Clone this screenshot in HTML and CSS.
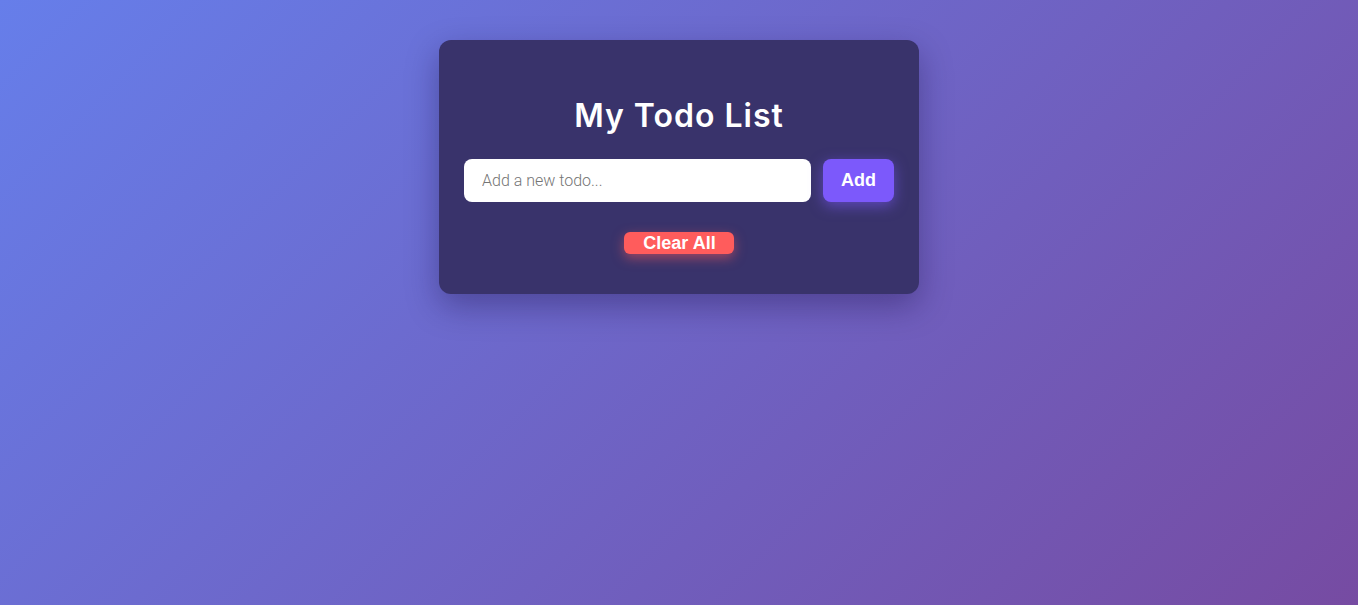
FILE: index.html
```html
<!DOCTYPE html>
<html lang="en">
<head>
<meta charset="utf-8">
<title>My Todo List</title>
<link rel="stylesheet" href="styles.css">
</head>
<body>
  <main class="card">
    <h1 class="title">My Todo List</h1>
    <form class="add-row" onsubmit="return false">
      <input class="todo-input" type="text" placeholder="Add a new todo...">
      <button class="add-btn" type="submit">Add</button>
    </form>
    <ul class="todo-list"></ul>
    <div class="actions">
      <button class="clear-btn" type="button">Clear All</button>
    </div>
  </main>
</body>
</html>
```
FILE: styles.css
```css
* { box-sizing: border-box; }

html, body {
  margin: 0;
  padding: 0;
}

body {
  min-height: 100vh;
  background: linear-gradient(135deg, #667eea 0%, #764ba2 100%);
  font-family: "Liberation Sans", Arial, sans-serif;
  display: flex;
  flex-direction: column;
  align-items: center;
  padding-top: 40px;
}

.card {
  width: 480px;
  background: #39336b;
  border-radius: 12px;
  padding: 52px 25px 40px;
  box-shadow: 0 12px 32px rgba(20, 10, 60, 0.35);
}

.title {
  margin: 0 0 19px;
  font-family: "Inter", "Noto Sans", sans-serif;
  font-weight: 600;
  font-size: 32px;
  line-height: 48px;
  letter-spacing: 1px;
  text-align: center;
  color: #ffffff;
}

.add-row {
  display: flex;
  gap: 12px;
  margin: 0;
}

.todo-input {
  flex: 1;
  height: 43px;
  border: none;
  border-radius: 8px;
  padding: 0 18px;
  font-family: "Roboto", "Liberation Sans", sans-serif;
  font-weight: 300;
  font-size: 16px;
  color: #333;
  background: #ffffff;
  outline: none;
}

.todo-input::placeholder {
  color: #757575;
}

.add-btn {
  width: 71px;
  height: 43px;
  border: none;
  border-radius: 8px;
  background: #7c59fb;
  color: #ffffff;
  font-family: "Liberation Sans", Arial, sans-serif;
  font-weight: 700;
  font-size: 18px;
  box-shadow: 0 4px 14px rgba(124, 89, 251, 0.55);
  cursor: pointer;
}

.todo-list {
  list-style: none;
  margin: 0;
  padding: 0;
}

.actions {
  display: flex;
  justify-content: center;
  margin-top: 30px;
}

.clear-btn {
  height: 22px;
  padding: 0 18px 0 19px;
  border: none;
  border-radius: 6px;
  background: #ff5c5c;
  color: #ffffff;
  font-family: "Liberation Sans", Arial, sans-serif;
  font-weight: 700;
  font-size: 18px;
  line-height: 22px;
  box-shadow: 0 4px 12px rgba(255, 92, 92, 0.5);
  cursor: pointer;
}
```
